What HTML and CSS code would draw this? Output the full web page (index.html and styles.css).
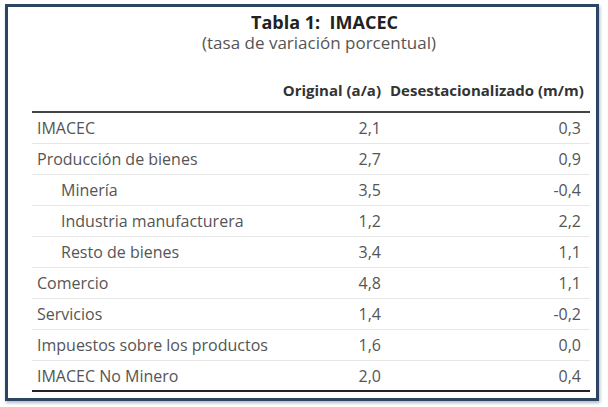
FILE: index.html
```html
<!DOCTYPE html>
<html lang="es">
<head>
<meta charset="utf-8">
<link rel="stylesheet" href="styles.css">
</head>
<body>
<div class="frame">
  <div class="title">Tabla 1:&nbsp; IMACEC</div>
  <div class="subtitle">(tasa de variación porcentual)</div>
  <div class="table">
    <div class="row head">
      <div class="label"></div>
      <div class="num">Original (a/a)</div>
      <div class="num">Desestacionalizado (m/m)</div>
    </div>
    <div class="row"><div class="label">IMACEC</div><div class="num">2,1</div><div class="num">0,3</div></div>
    <div class="row"><div class="label">Producción de bienes</div><div class="num">2,7</div><div class="num">0,9</div></div>
    <div class="row"><div class="label sub">Minería</div><div class="num">3,5</div><div class="num">-0,4</div></div>
    <div class="row"><div class="label sub">Industria manufacturera</div><div class="num">1,2</div><div class="num">2,2</div></div>
    <div class="row"><div class="label sub">Resto de bienes</div><div class="num">3,4</div><div class="num">1,1</div></div>
    <div class="row"><div class="label">Comercio</div><div class="num">4,8</div><div class="num">1,1</div></div>
    <div class="row"><div class="label">Servicios</div><div class="num">1,4</div><div class="num">-0,2</div></div>
    <div class="row"><div class="label">Impuestos sobre los productos</div><div class="num">1,6</div><div class="num">0,0</div></div>
    <div class="row last"><div class="label">IMACEC No Minero</div><div class="num">2,0</div><div class="num">0,4</div></div>
  </div>
</div>
</body>
</html>
```
FILE: styles.css
```css
* { box-sizing: border-box; }
html, body { margin: 0; padding: 0; background: #ffffff; }
body { width: 608px; height: 407px; overflow: hidden; }

.frame {
  margin: 4px 9px 0 5px;
  height: 397px;
  border: 3px solid #2c4565;
  box-shadow: 1px 2px 3px rgba(40, 60, 90, 0.35);
  background: #fff;
  font-family: "Open Sans", "Noto Sans", sans-serif;
  color: #555;
  padding: 4px 0 0 24px;
}

.title {
  text-align: center;
  font-weight: 700;
  font-size: 18px;
  line-height: 22px;
  color: #222;
  padding-left: 21px;
}

.subtitle {
  text-align: center;
  font-size: 17px;
  line-height: 20px;
  color: #555;
  padding-left: 10px;
}

.table {
  width: 558px;
}

.row {
  display: grid;
  grid-template-columns: 1fr 120px 200px;
  height: 31px;
  align-items: center;
  border-bottom: 1px solid #e6e6e6;
  font-size: 16px;
}

.row.head {
  height: 60px;
  font-size: 15px;
  line-height: 20px;
  font-weight: 700;
  color: #333;
  border-bottom: 2px solid #444;
  align-items: end;
  padding-bottom: 11px;
}

.row.head .num:last-child { padding-right: 11px; }

.row.last { border-bottom: 2px solid #222; }

.label { padding-left: 5px; }
.label.sub { padding-left: 29px; }
.num { text-align: right; padding-right: 9px; white-space: nowrap; }
```
